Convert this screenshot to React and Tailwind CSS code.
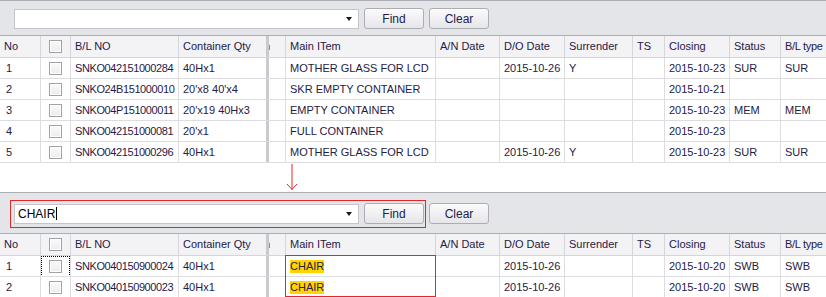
import React from "react";

const COLS = [
  { key: "no", label: "No", w: "w-[41px]" },
  { key: "chk", label: "", w: "w-[30px]" },
  { key: "bl", label: "B/L NO", w: "w-[108px]" },
  { key: "qty", label: "Container Qty", w: "w-[90px]", divider: true },
  { key: "cut", label: "", w: "w-[17px]" },
  { key: "item", label: "Main ITem", w: "w-[150px]" },
  { key: "an", label: "A/N Date", w: "w-[64px]" },
  { key: "do", label: "D/O Date", w: "w-[65px]" },
  { key: "sur", label: "Surrender", w: "w-[68px]" },
  { key: "ts", label: "TS", w: "w-[32px]" },
  { key: "close", label: "Closing", w: "w-[65px]" },
  { key: "status", label: "Status", w: "w-[51px]" },
  { key: "type", label: "B/L type", w: "w-[60px]" },
];

const TOP_ROWS = [
  { no: 1, bl: "SNKO042151000284", qty: "40Hx1", item: "MOTHER GLASS FOR LCD", do: "2015-10-26", sur: "Y", close: "2015-10-23", status: "SUR", type: "SUR" },
  { no: 2, bl: "SNKO24B151000010", qty: "20'x8 40'x4", item: "SKR EMPTY CONTAINER", close: "2015-10-21" },
  { no: 3, bl: "SNKO04P151000011", qty: "20'x19 40Hx3", item: "EMPTY CONTAINER", close: "2015-10-23", status: "MEM", type: "MEM" },
  { no: 4, bl: "SNKO042151000081", qty: "20'x1", item: "FULL CONTAINER", close: "2015-10-23" },
  { no: 5, bl: "SNKO042151000296", qty: "40Hx1", item: "MOTHER GLASS FOR LCD", do: "2015-10-26", sur: "Y", close: "2015-10-23", status: "SUR", type: "SUR" },
];

const BOTTOM_ROWS = [
  { no: 1, bl: "SNKO040150900024", qty: "40Hx1", item: "CHAIR", do: "2015-10-26", close: "2015-10-20", status: "SWB", type: "SWB", focus: true },
  { no: 2, bl: "SNKO040150900023", qty: "40Hx1", item: "CHAIR", do: "2015-10-26", close: "2015-10-20", status: "SWB", type: "SWB" },
];

function CheckBox() {
  return (
    <div className="h-[13px] w-[13px] border border-[#a2a2a6] bg-gradient-to-b from-[#fafafa] to-[#ececee] shadow-[inset_0_0_0_1px_#ffffff]" />
  );
}

function Cell({ col, header, children }) {
  const border = col.divider
    ? "border-r-[3px] border-r-[#c9c9ce]"
    : header
    ? "border-r border-r-[#d5d5db]"
    : "border-r border-r-[#dcdce1]";
  const pad = col.key === "chk" ? "justify-center" : col.key === "cut" ? "" : "pl-[4px]";
  let track = "";
  if (col.key === "bl" && !header) track = "tracking-[-0.4px]";
  if (col.key === "type" && header) track = "tracking-[-0.3px] pl-[3px]";
  return (
    <div className={`relative flex h-full shrink-0 items-center overflow-hidden whitespace-nowrap ${col.w} ${border} ${pad} ${track}`}>
      {children}
    </div>
  );
}

function Header() {
  return (
    <div className="flex h-[22px] border-b border-[#d5d5db] bg-[#f3f3f5]">
      {COLS.map((col) => (
        <Cell key={col.key} col={col} header>
          {col.key === "chk" ? (
            <CheckBox />
          ) : col.key === "cut" ? (
            <span className="-ml-[5px]">n</span>
          ) : (
            col.label
          )}
        </Cell>
      ))}
    </div>
  );
}

function Row({ row, highlight }) {
  return (
    <div className="flex h-[21px] border-b border-[#dcdce1] bg-white">
      {COLS.map((col) => {
        let content = row[col.key] ?? "";
        if (col.key === "no") content = <span className="pl-[2px]">{row.no}</span>;
        if (col.key === "chk") content = <CheckBox />;
        if (col.key === "cut") content = "";
        if (col.key === "item" && highlight)
          content = <span className="bg-[#ffd400] leading-[13px]">{row.item}</span>;
        return (
          <Cell key={col.key} col={col}>
            {content}
            {col.key === "chk" && row.focus && (
              <div className="absolute inset-x-0 top-0 bottom-[-1px] border border-dotted border-black" />
            )}
          </Cell>
        );
      })}
    </div>
  );
}

function Button({ children }) {
  return (
    <button
      type="button"
      className="flex h-[21px] w-[60px] items-center justify-center rounded-[3px] border border-[#adadb4] bg-gradient-to-b from-[#fbfbfc] to-[#e6e6ea] text-[12px] text-[#22224a]"
    >
      {children}
    </button>
  );
}

function SearchBar({ value, caret }) {
  return (
    <div className="flex items-center gap-[5px]">
      <div className="flex h-[20px] w-[345px] items-center border border-[#c4c4ca] bg-white pl-[3px] pr-[6px] text-[12px]">
        <span className="flex-1 truncate text-black">
          {value}
          {caret && <span className="ml-[1px] inline-block h-[13px] w-[1px] translate-y-[2px] bg-black" />}
        </span>
        <div className="h-0 w-0 border-x-[3.5px] border-t-[4px] border-x-transparent border-t-[#1a1a1a]" />
      </div>
      <Button>Find</Button>
      <Button>Clear</Button>
    </div>
  );
}

export default function App() {
  return (
    <div className="relative h-[297px] w-[826px] overflow-hidden bg-white font-['Liberation_Sans',Arial,sans-serif] text-[11px] text-[#1f2046]">
      {/* upper grid */}
      <div className="flex h-[36px] items-start border-y border-[#adadb4] bg-[#e4e5e9] pl-[14px] pt-[7px]">
        <SearchBar value="" />
      </div>
      <Header />
      {TOP_ROWS.map((row) => (
        <Row key={row.no} row={row} />
      ))}

      {/* arrow between the two states */}
      <div className="relative h-[29px]">
        <svg className="absolute left-[286px] top-[1px]" width="12" height="27" viewBox="0 0 12 27">
          <path d="M6 0 V25.5 M1 20 L6 25.5 L11 20" fill="none" stroke="#e3262a" strokeWidth="1" />
        </svg>
      </div>

      {/* lower grid after searching */}
      <div className="relative flex h-[42px] items-start border-y border-[#adadb4] bg-[#e4e5e9] pl-[14px] pt-[10px]">
        <SearchBar value="CHAIR" caret />
        <div className="absolute left-[10px] top-[7px] h-[28px] w-[416px] border border-[#e3262a]" />
      </div>
      <Header />
      <div className="relative">
        {BOTTOM_ROWS.map((row) => (
          <Row key={row.no} row={row} highlight />
        ))}
        <div className="absolute left-[285px] top-[-1px] h-[42px] w-[151px] border border-[#e3262a]" />
      </div>
    </div>
  );
}
